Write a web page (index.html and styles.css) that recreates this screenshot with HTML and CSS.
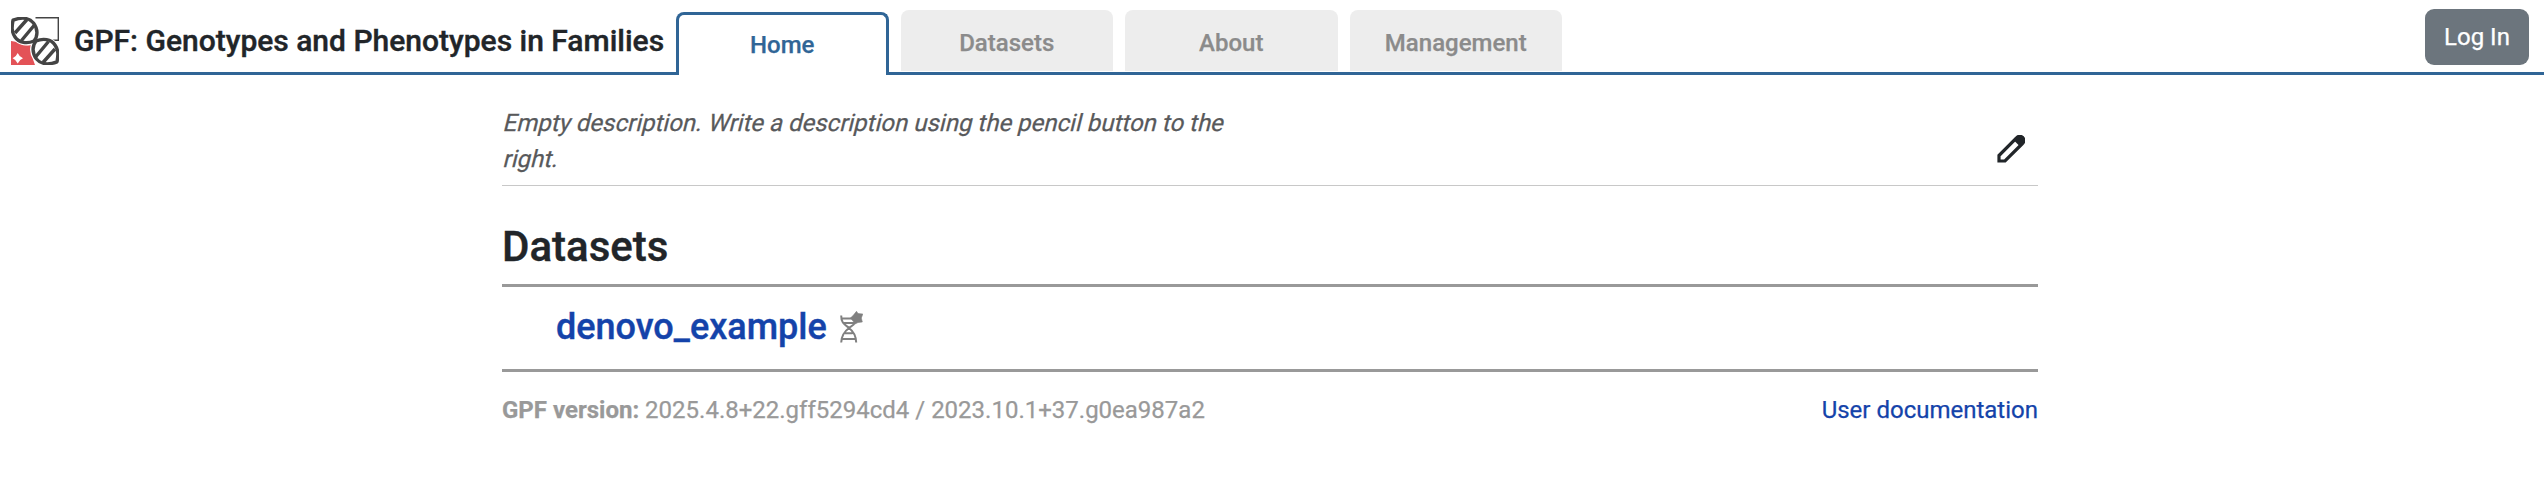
FILE: index.html
```html
<!DOCTYPE html>
<html lang="en">
<head>
<meta charset="utf-8">
<title>GPF: Genotypes and Phenotypes in Families</title>
<link rel="stylesheet" href="styles.css">
</head>
<body>
<header class="header">
  <svg class="logo" viewBox="0 0 48 48">
    <path d="M24.5 .7H47.3V23.3H40" fill="none" stroke="#444" stroke-width="1.4"/>
    <path d="M0 24 L6 25 Q12 29 20 28 Q20 38 24 48 H0Z" fill="#e35257"/>
    <path d="M6.700 36 Q8.200 39.700 12 41.200 Q8.200 42.700 6.700 46.400 Q5.200 42.700 1.600 41.200 Q5.200 39.700 6.700 36Z" fill="#fff"/>
    <g fill="#fff" stroke="#fff" stroke-width="5">
      <path d="M2 3.500C10 0 19 .5 23.500 6.500C28 13 27 20 23 24C17 28 8 26 4 20C0 14 1 9 2 3.500Z"/>
      <path d="M46 44.500C38 48 29 47.500 24.500 41.500C20 35 21 28 25 24C31 20 40 22 44 28C48 34 47 39 46 44.500Z"/>
    </g>
    <g fill="none" stroke="#444" stroke-width="3.400" stroke-linejoin="round">
      <path d="M2 3.200C10 0 18 .5 22.500 6C27 12 27 19 23 24C16 27 8 26 4 20C0 14 1 9 2 3.200Z"/>
      <path d="M46 44.800C38 48 30 47.500 25.500 42C21 36 21 29 25 24C32 21 40 22 44 28C48 34 47 39 46 44.800Z"/>
      <path d="M4 16L16 2.500M10.500 23.500L23 8.500M44 32L32 45.500M37.500 24.500L25 39.500"/>
    </g>
  </svg>
  <h1 class="title">GPF: Genotypes and Phenotypes in Families</h1>
  <nav class="tabs">
    <a class="tab tab-active">Home</a>
    <a class="tab">Datasets</a>
    <a class="tab">About</a>
    <a class="tab">Management</a>
  </nav>
  <button class="login">Log In</button>
</header>
<main class="content">
  <section class="description">
    <p class="description-text"><span class="slanted">Empty description. Write a description using the pencil button to the</span> <span class="slanted">right.</span></p>
    <svg class="pencil" viewBox="0 0 28 28">
      <path d="M2 26V20.500L19 3.500Q22 -.5 25.500 2.500Q28.500 5.500 25 9L8 26Z" fill="none" stroke="#212529" stroke-width="3.200" stroke-linejoin="miter"/>
      <path d="M17 5.500L20 2.500Q23.500 -1 26.500 1.500Q29 4.500 26 7.500L22.500 11Z" fill="#212529"/>
    </svg>
  </section>
  <h2 class="heading">Datasets</h2>
  <section class="dataset">
    <a class="dataset-link">denovo_example</a>
    <svg class="dna" viewBox="0 0 23 32">
      <g fill="none" stroke="#808080" stroke-width="2">
        <path d="M1.200 4.500C1 13 6 14 9 17C13 20 16 24 16.200 31.500M15 11C14 15 11 15 9 17C5 20 1.500 24 1.200 31.500M2 7.500H13M3.500 12H14M5 22.300H12.500M2.500 28H15.500"/>
      </g>
      <path d="M16.500 .3L18 2.600L22.800 3L21.300 7L22.300 11L18 11.500L15 13L13 10L10.500 7L13.500 4Z" fill="#808080" stroke="#808080" stroke-width=".6"/>
    </svg>
  </section>
  <footer class="footer">
    <span><b>GPF version:</b> 2025.4.8+22.gff5294cd4 / 2023.10.1+37.g0ea987a2</span>
    <a class="docs">User documentation</a>
  </footer>
</main>
</body>
</html>
```
FILE: styles.css
```css
* { box-sizing: border-box; }
body { margin: 0; background: #fff; color: #212529; font: 24px/36px Roboto, sans-serif; -webkit-text-stroke: .25px currentColor; }
.header { display: flex; align-items: flex-start; height: 75px; background: linear-gradient(#306596, #306596) bottom / 100% 3px no-repeat; }
.logo { width: 48px; height: 48px; margin: 17px 0 0 11px; flex: none; }
.title { width: 602px; margin: 23px 0 0 15px; font-size: 30px; line-height: 36px; font-weight: 500; white-space: nowrap; -webkit-text-stroke-width: .4px; }
.tabs { display: flex; gap: 12px; height: 75px; padding-top: 10px; }
.tab { width: 212.5px; height: 61px; border-radius: 8px 8px 0 0; background: #ededed; color: #8b8b8b; font-weight: 500; line-height: 66px; text-align: center; -webkit-text-stroke-color: #8b8b8b; }
.tab-active { height: 63px; margin-top: 2px; border: 3px solid #306596; border-bottom: 0; background: #fff; color: #306596; line-height: 60px; -webkit-text-stroke-color: #306596; }
.login { width: 104px; height: 56px; margin: 9px 15px 0 auto; padding: 0; border: 0; border-radius: 9px; background: #6c757d; color: #fff; font: 24px/56px Roboto, sans-serif; -webkit-text-stroke-color: #fff; }
.content { width: 1536px; margin-left: 502px; }
.description { display: flex; justify-content: space-between; height: 111px; padding-top: 30px; border-bottom: 1px solid #c8c8c8; }
.description-text { width: 768px; margin: 0; color: #58595b; -webkit-text-stroke-color: #58595b; }
.slanted { display: block; transform: skewX(-14deg); transform-origin: 0 27px; white-space: nowrap; }
.pencil { width: 28px; height: 28px; margin: 30px 13px 0 0; }
.heading { height: 101px; margin: 0; padding-top: 36px; border-bottom: 3px solid #999; font-size: 42px; line-height: 50px; font-weight: 500; -webkit-text-stroke-width: .4px; }
.dataset { display: flex; height: 85px; padding: 18px 0 0 54px; border-bottom: 3px solid #999; }
.dataset-link { color: #1443aa; font-size: 36px; line-height: 44px; font-weight: 500; -webkit-text-stroke: .4px #1443aa; }
.dna { width: 23px; height: 32px; margin: 6px 0 0 13px; }
.footer { display: flex; justify-content: space-between; padding-top: 20px; color: #999; -webkit-text-stroke-color: #999; }
.docs { color: #1443aa; -webkit-text-stroke-color: #1443aa; }
```
